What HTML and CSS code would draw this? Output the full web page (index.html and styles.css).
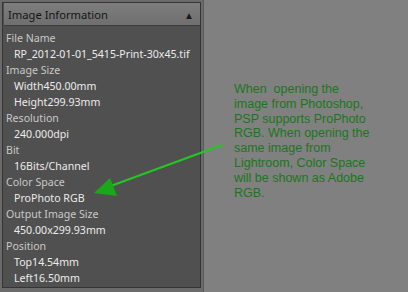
FILE: index.html
```html
<!DOCTYPE html>
<html lang="en">
<head>
    <meta charset="UTF-8">
    <title>Image Information</title>
    <link rel="stylesheet" href="styles.css">
</head>
<body>
    <div class="page">
        <div class="frame">
            <div class="panel">
                <div class="panel_head">
                    <span>Image Information</span>
                    <span class="toggle">&#9650;</span>
                </div>
                <dl class="info">
                    <dt>File Name</dt>
                    <dd>RP_2012-01-01_5415-Print-30x45.tif</dd>
                    <dt>Image Size</dt>
                    <dd>Width450.00mm</dd>
                    <dd>Height299.93mm</dd>
                    <dt>Resolution</dt>
                    <dd>240.000dpi</dd>
                    <dt>Bit</dt>
                    <dd>16Bits/Channel</dd>
                    <dt>Color Space</dt>
                    <dd>ProPhoto RGB</dd>
                    <dt>Output Image Size</dt>
                    <dd>450.00x299.93mm</dd>
                    <dt>Position</dt>
                    <dd>Top14.54mm</dd>
                    <dd>Left16.50mm</dd>
                </dl>
            </div>
        </div>
        <div class="note">
            <p>When &nbsp;opening the image from Photoshop, PSP supports ProPhoto RGB. When opening the same image from Lightroom, Color Space will be shown as Adobe RGB.</p>
        </div>
        <!-- arrow pointing from the note to the colour space value -->
        <svg class="arrow" width="408" height="292" viewBox="0 0 408 292">
            <line x1="222" y1="145" x2="108" y2="187" stroke="#22c722" stroke-width="2"/>
            <polygon points="94,193 110,178 117,196" fill="#1aa81a"/>
        </svg>
    </div>
</body>
</html>
```

FILE: styles.css
```css
body,
html {
    margin: 0;
    padding: 0;
    height: 100%;
    background-color: #808080;
    overflow: hidden;
}

.page {
    position: relative;
    display: flex;
    height: 292px;
}

.frame {
    width: 199px;
    background: #6b6b6b;
    padding: 2px 2px 2px 2px;
    border-right: 1px solid #5a5a5a;
}

.panel {
    height: 284px;
    background: #505050;
    border: 1px solid #353535;
    font-family: 'Noto Sans', sans-serif;
    font-size: 10.6px;
}

.panel_head {
    display: flex;
    justify-content: space-between;
    align-items: center;
    height: 21px;
    margin-left: 1px;
    padding: 1px 6px 0 4px;
    background: linear-gradient(#7d7d7d, #6f6f6f);
    border-bottom: 1px solid #3c3c3c;
    color: #151515;
    font-size: 11.2px;
}

.toggle {
    font-size: 10px;
    color: #1a1a1a;
}

.info {
    margin: 0;
    padding: 4px 0 0 3px;
    line-height: 16px;
    white-space: nowrap;
}

.info dt {
    color: #c9c9c9;
}

.info dd {
    margin: 0;
    padding-left: 8px;
    color: #ececec;
}

.note {
    flex: 1;
    padding: 82px 0 0 30px;
}

.note p {
    margin: 0;
    width: 140px;
    font-family: 'Liberation Sans', Arial, sans-serif;
    font-size: 12.5px;
    line-height: 14.8px;
    color: #1c761c;
}

.arrow {
    position: absolute;
    left: 0;
    top: 0;
}
```
